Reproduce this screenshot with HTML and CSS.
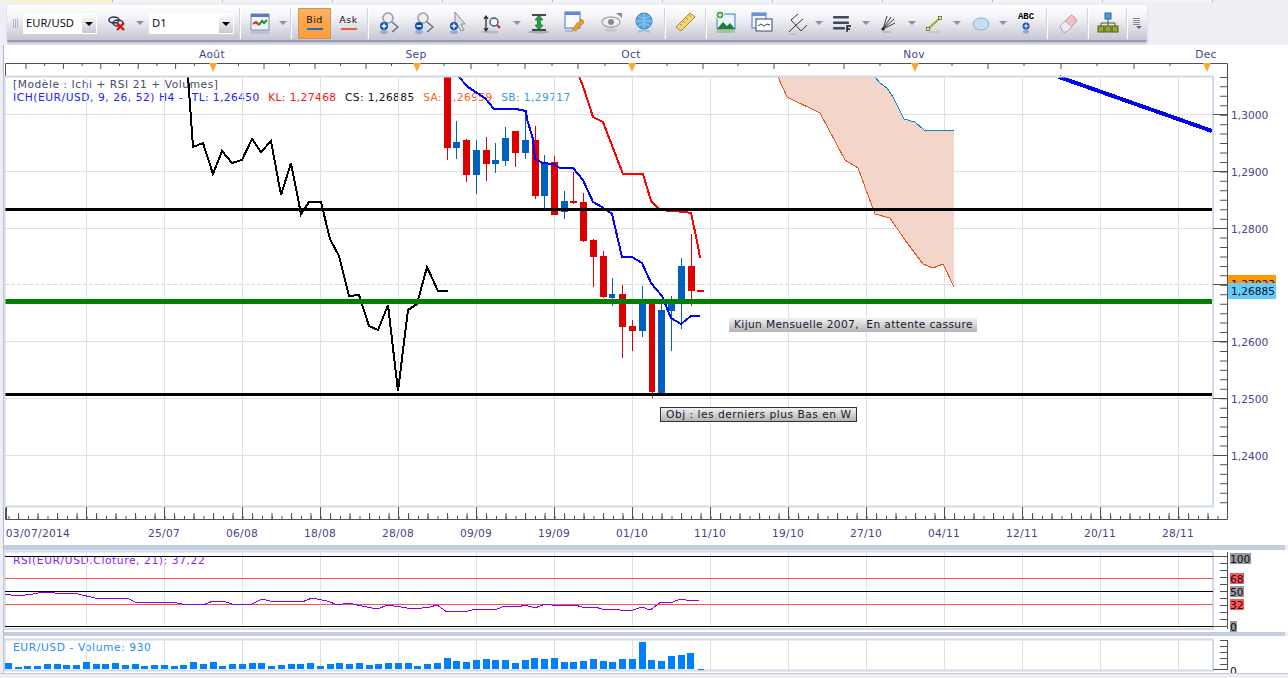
FILE: index.html
```html
<!DOCTYPE html>
<html lang="fr">
<head>
    <meta charset="UTF-8">
    <title>EUR/USD - Graphique</title>
    <link rel="stylesheet" href="styles.css">
</head>
<body>
    <div class="tabs">
        <div class="tab tab-active"></div><div class="tab"></div><div class="tab"></div><div class="tab"></div><div class="tab"></div><div class="tab"></div><div class="tab"></div><div class="tab"></div><div class="tab"></div><div class="tab"></div><div class="tab"></div>
    </div>

    <div class="toolbar">
        <div class="grip"></div>
        <div class="combo combo-pair"><span>EUR/USD</span><i class="combo-btn"></i></div>
        <svg class="icon" viewBox="0 0 24 24"><g fill="none" stroke="#2a3a5a" stroke-width="1.6"><ellipse cx="8" cy="9" rx="5" ry="3"/><ellipse cx="12" cy="12" rx="5" ry="3"/></g><path d="M11 12l7 7M18 12l-7 7" stroke="#e01010" stroke-width="2.4"/></svg>
        <i class="arrow"></i>
        <div class="combo combo-period"><span>D1</span><i class="combo-btn"></i></div>
        <i class="sep"></i>
        <svg class="icon" viewBox="0 0 24 24"><rect x="3" y="3" width="18" height="16" fill="#eef2fa" stroke="#7a8ab0"/><rect x="3" y="3" width="18" height="3" fill="#5a7ac0"/><path d="M5 13l3-2 3 3" fill="none" stroke="#e02020" stroke-width="2"/><path d="M11 14l3-4 2 2 3-3" fill="none" stroke="#209020" stroke-width="2"/><rect x="3" y="20" width="18" height="3" fill="#b8c0d4"/></svg>
        <i class="arrow"></i>
        <i class="sep"></i>
        <button class="quote quote-on">Bid<i class="bar-blue"></i></button>
        <button class="quote">Ask<i class="bar-red"></i></button>
        <i class="sep"></i>
        <svg class="icon" viewBox="0 0 24 24"><circle cx="12" cy="7" r="5" fill="#eef0f4" stroke="#9aa0aa" stroke-width="1.6"/><path d="M16 11l6 5-6 5" fill="none" stroke="#606470" stroke-width="1.2"/><circle cx="8" cy="15" r="4" fill="#1050b0"/><path d="M5.6 15h4.8M8 12.6v4.8" stroke="#fff" stroke-width="1.5"/><ellipse cx="8" cy="21" rx="4" ry="2" fill="#1050b0" opacity=".3"/></svg>
        <svg class="icon" viewBox="0 0 24 24"><circle cx="12" cy="7" r="5" fill="#eef0f4" stroke="#9aa0aa" stroke-width="1.6"/><path d="M16 11l6 5-6 5" fill="none" stroke="#606470" stroke-width="1.2"/><circle cx="8" cy="15" r="4" fill="#1050b0"/><path d="M5.6 15h4.8" stroke="#fff" stroke-width="1.6"/><ellipse cx="8" cy="21" rx="4" ry="2" fill="#1050b0" opacity=".3"/></svg>
        <svg class="icon" viewBox="0 0 24 24"><path d="M9 1l10 12h-4l3 6-3 1-3-6-3 3z" fill="#dfe1e6" stroke="#8a8e98"/><circle cx="8" cy="15" r="4" fill="#1050b0"/><path d="M5.6 15h4.8M8 12.6v4.8" stroke="#fff" stroke-width="1.5"/><ellipse cx="8" cy="21" rx="4" ry="2" fill="#1050b0" opacity=".3"/></svg>
        <svg class="icon" viewBox="0 0 24 24"><path d="M6 6v13M4 8l2-3 2 3M4 17l2 3 2-3" fill="none" stroke="#202020" stroke-width="1.2"/><circle cx="14" cy="11" r="4" fill="#f4f8fc" stroke="#405870" stroke-width="1.4"/><path d="M17 14l3 3" stroke="#c03020" stroke-width="2"/><ellipse cx="10" cy="21" rx="9" ry="1.5" fill="#80848c" opacity=".4"/></svg>
        <i class="arrow"></i>
        <svg class="icon" viewBox="0 0 24 24"><path d="M5 4h14M5 19h14" stroke="#101010" stroke-width="1.6"/><path d="M12 4l4 5h-2.4v5H16l-4 5-4-5h2.4V9H8z" fill="#20a040" stroke="#106020" stroke-width=".6"/><ellipse cx="12" cy="21" rx="11" ry="1.5" fill="#70747c" opacity=".45"/></svg>
        <svg class="icon" viewBox="0 0 24 24"><rect x="2" y="1" width="15" height="16" fill="#f8faff" stroke="#4a78c8"/><rect x="2" y="1" width="15" height="3" fill="#5a8ad8"/><path d="M9 19l5-7 3-1 1-3 3 2-1 3-3 1-4 6z" fill="#f0a020" stroke="#b07010" stroke-width=".6"/><path d="M2 20h8" stroke="#4a78c8" opacity=".3" stroke-width="2"/></svg>
        <svg class="icon" viewBox="0 0 24 24"><ellipse cx="11" cy="11" rx="9" ry="5" fill="#f0f0f0" stroke="#a8a8a8" stroke-width="1.4"/><circle cx="11" cy="11" r="3" fill="#8a8a8a"/><path d="M16 2h6v5z" fill="#8a8a8a"/><ellipse cx="11" cy="19" rx="6" ry="2" fill="#b0b0b0" opacity=".4"/></svg>
        <svg class="icon" viewBox="0 0 24 24"><circle cx="12" cy="10" r="8" fill="#5aa8e0" stroke="#3a80c0"/><path d="M4 10h16M12 2v16M6 5c4 3 8 3 12 0M6 15c4-3 8-3 12 0" fill="none" stroke="#a8d4f4" stroke-width=".8"/><path d="M6 21l6-2 6 2" fill="none" stroke="#5aa8e0" opacity=".5" stroke-width="2"/></svg>
        <i class="sep"></i>
        <svg class="icon" viewBox="0 0 24 24"><path d="M3 16L17 2l5 4L8 20z" fill="#f4d878" stroke="#a88830"/><path d="M7 13l2 2M10 10l2 2M13 7l2 2M16 4l2 2" stroke="#a88830"/></svg>
        <i class="sep"></i>
        <svg class="icon" viewBox="0 0 24 24"><rect x="3" y="3" width="18" height="15" fill="#e8f4fc" stroke="#4a78b8"/><path d="M3 18l6-7 4 4 3-3 5 6z" fill="#208030"/><circle cx="6" cy="4" r="4" fill="#40a040" stroke="#fff"/><path d="M4 4h4M6 2v4" stroke="#fff"/><rect x="3" y="19" width="18" height="3" fill="#a0c890"/></svg>
        <svg class="icon" viewBox="0 0 24 24"><rect x="2" y="2" width="14" height="15" fill="#eef4fc" stroke="#4a78c0"/><rect x="2" y="2" width="14" height="3" fill="#6a94d8"/><rect x="6" y="8" width="16" height="12" fill="#fff" stroke="#304878"/><path d="M8 15l3-2 3 2 3-2 3 1" fill="none" stroke="#404040"/></svg>
        <svg class="icon" viewBox="0 0 24 24"><path d="M4 21L10 15M6 9L16 20M6 9L13 3M10 15L18 8M16 20L22 14" fill="none" stroke="#383838"/><path d="M4 23h8" stroke="#a0a0a8" opacity=".6"/></svg>
        <i class="arrow"></i>
        <svg class="icon" viewBox="0 0 24 24"><rect x="3" y="5" width="16" height="2.4" rx="1" fill="#3a4a60"/><rect x="3" y="10.5" width="16" height="2.4" rx="1" fill="#3a4a60"/><rect x="3" y="16" width="12" height="2.4" rx="1" fill="#3a4a60"/><path d="M17 21v-6h4M17 18h3" fill="none" stroke="#101010" stroke-width="1.3"/></svg>
        <i class="arrow"></i>
        <svg class="icon" viewBox="0 0 24 24"><path d="M7 18L11 5M7 18L15 6M7 18L18 8M7 18L19 12" stroke="#383838" fill="none"/><circle cx="7" cy="18" r="1.6" fill="#202020"/><path d="M6 21h9" stroke="#a0a0a8" opacity=".6" stroke-width="1.5"/></svg>
        <i class="arrow"></i>
        <svg class="icon" viewBox="0 0 24 24"><path d="M6 18L18 7" stroke="#90b030" stroke-width="2"/><rect x="4.5" y="16.5" width="3" height="3" fill="#f0f0a0" stroke="#505010" stroke-width=".7"/><rect x="16.5" y="5.5" width="3" height="3" fill="#f0f0a0" stroke="#505010" stroke-width=".7"/><path d="M7 21h12" stroke="#a0a0a8" opacity=".5"/></svg>
        <i class="arrow"></i>
        <svg class="icon" viewBox="0 0 24 24"><ellipse cx="12" cy="13" rx="8" ry="6" fill="#c8dcf0" stroke="#8ab0d4"/></svg>
        <i class="arrow"></i>
        <div class="abc"><span>ABC</span><svg viewBox="0 0 10 12" width="10" height="12"><circle cx="5" cy="4" r="3.5" fill="#1050b0"/><path d="M2.6 4h4.8M5 1.6v4.8" stroke="#fff"/><ellipse cx="5" cy="9.5" rx="3" ry="2" fill="#1050b0" opacity=".35"/></svg></div>
        <i class="sep"></i>
        <svg class="icon" viewBox="0 0 24 24"><path d="M4 15L14 5c1-1 2-1 3 0l3 3c1 1 1 2 0 3L10 21H7z" fill="#f0c0c8" stroke="#c89098"/><path d="M4 15l5-5 7 6-6 5H7z" fill="#ececf0" stroke="#b0b0b8"/></svg>
        <i class="sep"></i>
        <svg class="icon" viewBox="0 0 24 24"><rect x="9" y="2" width="6" height="6" fill="#4a9ae0" stroke="#2a6ab0"/><path d="M12 8v4M5 12h14M5 12v3M12 12v3M19 12v3" stroke="#506010" fill="none"/><g fill="#90a830" stroke="#506010"><rect x="2" y="15" width="6" height="6"/><rect x="9" y="15" width="6" height="6"/><rect x="16" y="15" width="6" height="6"/></g></svg>
        <i class="sep"></i>
        <svg class="menu-icon" viewBox="0 0 9 11"><path d="M0 .5h7M0 2.5h7M0 4.5h7M0 6.5h7" stroke="#8a8a94"/><path d="M3 8h6l-3 3z" fill="#6a6a74"/></svg>
    </div>

    <div class="pane pane-main">
        <svg class="plot" width="1288" height="500" viewBox="0 45 1288 500">
            <!-- echelle du temps en haut -->
            <path class="axis" d="M5 76V63H1227V519H5V507"/>
            <path class="tick" d="M26 63v6M63.4 63v6M100.8 63v6M138.2 63v6M175.6 63v6M213 63v6M264 63v6M315 63v6M366 63v6M417 63v6M471 63v6M525 63v6M578 63v6M632 63v6M703 63v6M774 63v6M844 63v6M915 63v6M988 63v6M1061 63v6M1134 63v6M1207 63v6"/>
            <path class="tick" d="M44.7 63v3M82.1 63v3M119.5 63v3M156.9 63v3M194.3 63v3M238.5 63v3M289.5 63v3M340.5 63v3M391.5 63v3M444 63v3M498 63v3M552 63v3M605 63v3M667 63v3M738 63v3M809 63v3M880 63v3M952 63v3M1024 63v3M1097 63v3M1170 63v3"/>
            <g class="month-mark">
                <path d="M209 63h8l-4 9zM413 63h8l-4 9zM628 63h8l-4 9zM911 63h8l-4 9zM1203 63h8l-4 9z"/>
            </g>
            <g class="label label-date" text-anchor="middle">
                <text x="212" y="58">Août</text>
                <text x="416" y="58">Sep</text>
                <text x="631" y="58">Oct</text>
                <text x="914" y="58">Nov</text>
                <text x="1206" y="58">Dec</text>
            </g>

            <!-- grille -->
            <path class="grid" d="M86.5 77V507M164.5 77V507M242.5 77V507M320.5 77V507M398.5 77V507M476.5 77V507M554.5 77V507M632.5 77V507M710.5 77V507M788.5 77V507M866.5 77V507M944.5 77V507M1022.5 77V507M1100.5 77V507M1178.5 77V507"/>
            <path class="grid" d="M5 114.5H1213M5 171.5H1213M5 228.5H1213M5 341.5H1213M5 398.5H1213M5 455.5H1213"/>
            <path class="last-price" d="M5 284.5H1213"/>

            <!-- nuage ichimoku -->
            <path class="cloud" d="M778 77L787 97 820 113 845 160 858 168 875 214 890 218 905 240 923 264 933 268 943 264 954 287V130H924L915 122 904 119 893 97 887 88 880 83 875 77Z"/>
            <path class="senkou-a" d="M778 77L787 97 820 113 845 160 858 168 875 214 890 218 905 240 923 264 933 268 943 264 954 287"/>
            <path class="senkou-b" d="M875 77L880 83 887 88 893 97 904 119 915 122 924 130H954"/>

            <!-- bougies : meches puis corps -->
            <path class="wick-red" d="M447.5 147V160M466.5 139V182M486.5 137V181M515.5 131V167M535.5 126V199M554.5 156V215M573.5 172V204M583.5 193V242M593.5 239V287M603.5 251V298M622.5 285V358M632.5 320V351M652.5 304V398M691.5 234V306"/>
            <path class="wick-blue" d="M456.5 121V159M476.5 140V194M495.5 143V173M505.5 127V166M525.5 112V159M544.5 155V210M564.5 191V219M612.5 278V306M642.5 286V337M661.5 303V393M671.5 296V351M681.5 258V329"/>
            <path class="body-red" d="M444 76h7v72h-7zM463 140h7v35h-7zM483 150h7v14h-7zM512 131h7v22h-7zM532 140h7v56h-7zM551 162h7v53h-7zM570 201h7v2h-7zM580 202h7v39h-7zM590 240h7v17h-7zM600 256h7v41h-7zM619 294h7v33h-7zM629 326h7v5h-7zM649 304h6v88h-6zM688 266h7v25h-7zM697 290h7v2h-7z"/>
            <path class="body-blue" d="M453 142h7v6h-7zM473 150h7v25h-7zM492 160h7v4h-7zM502 138h7v23h-7zM522 140h7v13h-7zM541 162h7v34h-7zM561 201h7v11h-7zM609 294h6v4h-6zM639 304h7v27h-7zM658 310h7v83h-7zM668 304h7v7h-7zM678 266h7v33h-7z"/>

            <!-- tenkan, kijun, chikou, droite -->
            <path class="tenkan" d="M458 76L468 87 477 93 485 98 494 109H516L526 111 527 119 533 139 535 159 543 163 553 164 560 168H573L583 180 593 202 602 207 612 214 622 257H632L642 263 651 283 662 296 671 318 681 324 691 316H700"/>
            <path class="kijun" d="M579 76L584 89 593 117 603 122 623 174H643L651 201 660 210 685 212 691 213 698 246 700 258"/>
            <path class="chikou" d="M188 76L193 147 203 143 213 174 222 151 232 163 242 160 252 139 261 152 271 141 281 195 291 163 301 214 309 202H321L330 239 339 256 349 296 359 295 369 326 378 330 388 305 398 391 408 310 417 304 427 267 438 291H448"/>
            <path class="trend" d="M1059 77L1212 131"/>

            <!-- niveaux traces a la main -->
            <rect class="level-black" x="5" y="208" width="1208" height="3"/>
            <rect class="level-green" x="5" y="299" width="1208" height="5"/>
            <rect class="level-black" x="5" y="393" width="1208" height="3"/>

            <rect class="plot-border" x="4.5" y="76.5" width="1208.5" height="430"/>

            <!-- echelle de prix -->
            <line class="tick" x1="1223.5" x2="1223.5" y1="76.9" y2="507" stroke-width="7" stroke-dasharray="1 8.45"/>
            <path class="tick" d="M1213 114.5h14M1213 171.5h14M1213 228.5h14M1213 284.5h14M1213 341.5h14M1213 398.5h14M1213 455.5h14"/>
            <g class="label">
                <text x="1231" y="119">1,3000</text>
                <text x="1231" y="176">1,2900</text>
                <text x="1231" y="233">1,2800</text>
                <text x="1231" y="346">1,2600</text>
                <text x="1231" y="403">1,2500</text>
                <text x="1231" y="460">1,2400</text>
            </g>
            <rect x="1228" y="275" width="48" height="9" fill="#ff9900"/>
            <text class="tag-text" x="1231" y="288">1,27023</text>
            <rect x="1228" y="283" width="48" height="16" fill="#66ccff"/>
            <text class="tag-text" x="1231" y="295">1,26885</text>

            <!-- echelle des dates -->
            <line class="tick" x1="8.5" x2="1225" y1="517.5" y2="517.5" stroke-width="3" stroke-dasharray="1 8.75"/>
            <line class="tick" x1="18" x2="1225" y1="516" y2="516" stroke-width="6" stroke-dasharray="1 18.5"/>
            <path class="tick" d="M6.5 507V519M86.5 507V519M164.5 507V519M242.5 507V519M320.5 507V519M398.5 507V519M476.5 507V519M554.5 507V519M632.5 507V519M710.5 507V519M788.5 507V519M866.5 507V519M944.5 507V519M1022.5 507V519M1100.5 507V519M1178.5 507V519"/>
            <g class="label label-date" text-anchor="middle">
                <text x="38" y="537">03/07/2014</text>
                <text x="164" y="537">25/07</text>
                <text x="242" y="537">06/08</text>
                <text x="320" y="537">18/08</text>
                <text x="398" y="537">28/08</text>
                <text x="476" y="537">09/09</text>
                <text x="554" y="537">19/09</text>
                <text x="632" y="537">01/10</text>
                <text x="710" y="537">11/10</text>
                <text x="788" y="537">19/10</text>
                <text x="866" y="537">27/10</text>
                <text x="944" y="537">04/11</text>
                <text x="1022" y="537">12/11</text>
                <text x="1100" y="537">20/11</text>
                <text x="1178" y="537">28/11</text>
            </g>
        </svg>

        <div class="legend">
            <div class="legend-title">[Modèle : Ichi + RSI 21 + Volumes]</div>
            <div class="legend-row">
                <span class="c-tl c-name">ICH(EUR/USD, 9, 26, 52) H4 -</span>
                <span class="c-tl">TL: 1,26450</span>
                <span class="c-kl">KL: 1,27468</span>
                <span class="c-cs">CS: 1,26885</span>
                <span class="c-sa">SA: 1,26959</span>
                <span class="c-sb">SB: 1,29717</span>
            </div>
        </div>
        <div class="note note-kijun">Kijun Mensuelle 2007,&nbsp; En attente cassure</div>
        <div class="note note-obj">Obj : les derniers plus Bas en W</div>
    </div>

    <div class="splitter"></div>

    <div class="pane pane-rsi">
        <svg class="plot" width="1288" height="82" viewBox="0 550 1288 82">
            <path class="grid" d="M86.5 553V629M164.5 553V629M242.5 553V629M320.5 553V629M398.5 553V629M476.5 553V629M554.5 553V629M632.5 553V629M710.5 553V629M788.5 553V629M866.5 553V629M944.5 553V629M1022.5 553V629M1100.5 553V629M1178.5 553V629"/>
            <rect class="plot-border" x="4.5" y="551.5" width="1208.5" height="77.5"/>
            <path class="rsi-level" d="M5 578.5H1213M5 604.5H1213"/>
            <path class="rsi-frame" d="M5 556.5H1213M5 591.5H1213M5 626.5H1213"/>
            <path class="rsi-line" d="M5 594L17 596 33 594 43 592 55 593 78 594 95 598H127L135 602 160 603 172 602 182 604 203 605 213 601H223L232 604H252L262 599 270 601 302 602 312 598 327 601 338 605 348 603 367 607 377 609 388 605 407 608H422L430 607 437 605 447 612 453 611 465 612 475 609H497L505 606 518 607 525 605 535 608 545 604 558 606 562 605H575L582 607H595L602 609H618L620 610H633L642 607 650 610 661 602H673L680 599 686 600H699"/>
            <path class="tick" d="M1227.5 552V629M1213 556.5h14M1213 626.5h14M1220 591.5h7"/>
            <line class="tick" x1="1223.5" x2="1223.5" y1="563" y2="626" stroke-width="7" stroke-dasharray="1 6"/>
            <rect class="tag-grey" x="1230" y="553" width="21" height="11"/>
            <rect class="tag-red" x="1230" y="573" width="14" height="11"/>
            <rect class="tag-grey" x="1230" y="586" width="14" height="11"/>
            <rect class="tag-red" x="1230" y="599" width="14" height="11"/>
            <rect class="tag-grey" x="1230" y="621" width="7" height="11"/>
            <g class="tag-text">
                <text x="1230" y="562.5">100</text>
                <text x="1230" y="582.5">68</text>
                <text x="1230" y="595.5">50</text>
                <text x="1230" y="608.5">32</text>
                <text x="1230" y="630.5">0</text>
            </g>
        </svg>
        <div class="rsi-title">RSI(EUR/USD.Cloture, 21): 37,22</div>
    </div>

    <div class="splitter"></div>

    <div class="pane pane-volume">
        <svg class="plot" width="1288" height="37" viewBox="0 636 1288 37">
            <path class="grid" d="M86.5 640V671M164.5 640V671M242.5 640V671M320.5 640V671M398.5 640V671M476.5 640V671M554.5 640V671M632.5 640V671M710.5 640V671M788.5 640V671M866.5 640V671M944.5 640V671M1022.5 640V671M1100.5 640V671M1178.5 640V671"/>
            <rect class="plot-border" x="4.5" y="639.5" width="1208.5" height="31"/>
            <path class="volume" d="M5 663h7v6h-7zM15 667h7v2h-7zM24 666h7v3h-7zM34 666h7v3h-7zM44 664h7v5h-7zM54 664h7v5h-7zM63 665h7v4h-7zM73 665h7v4h-7zM83 662h7v7h-7zM93 664h7v5h-7zM102 664h7v5h-7zM112 663h7v6h-7zM122 665h7v4h-7zM132 664h7v5h-7zM141 666h7v3h-7zM151 665h7v4h-7zM161 665h7v4h-7zM171 666h7v3h-7zM180 665h7v4h-7zM190 662h7v7h-7zM200 664h7v5h-7zM210 662h7v7h-7zM219 666h7v3h-7zM229 664h7v5h-7zM239 664h7v5h-7zM249 663h7v6h-7zM258 663h7v6h-7zM268 666h7v3h-7zM278 665h7v4h-7zM288 664h7v5h-7zM297 664h7v5h-7zM307 663h7v6h-7zM317 666h7v3h-7zM327 664h7v5h-7zM336 663h7v6h-7zM346 664h7v5h-7zM356 663h7v6h-7zM366 665h7v4h-7zM375 664h7v5h-7zM385 663h7v6h-7zM395 663h7v6h-7zM405 663h7v6h-7zM414 666h7v3h-7zM424 664h7v5h-7zM434 663h7v6h-7zM444 658h7v11h-7zM453 661h7v8h-7zM463 662h7v7h-7zM473 660h7v9h-7zM483 659h7v10h-7zM492 660h7v9h-7zM502 660h7v9h-7zM512 663h7v6h-7zM522 660h7v9h-7zM531 658h7v11h-7zM541 659h7v10h-7zM551 658h7v11h-7zM561 662h7v7h-7zM570 662h7v7h-7zM580 661h7v8h-7zM590 659h7v10h-7zM600 661h7v8h-7zM609 662h7v7h-7zM619 659h7v10h-7zM629 659h7v10h-7zM639 642h7v27h-7zM648 660h7v9h-7zM658 661h7v8h-7zM668 656h7v13h-7zM678 655h7v14h-7zM687 653h7v16h-7zM698 669h6v1h-6z"/>
            <path class="tick" d="M1227.5 640V670M1213 669.5h14"/>
            <line class="tick" x1="1223.5" x2="1223.5" y1="640" y2="668" stroke-width="7" stroke-dasharray="1 5"/>
            <text class="tag-text" x="1230" y="675">0</text>
        </svg>
        <div class="volume-title">EUR/USD - Volume: 930</div>
    </div>
    <div class="footer"></div>
</body>
</html>
```

FILE: styles.css
```css
body {
    margin: 0;
    width: 1288px;
    height: 678px;
    overflow: hidden;
    background-color: #eeeef5;
    font-family: "DejaVu Sans", Verdana, sans-serif;
    font-size: 10.67px;
}
.tabs {
    display: flex;
    height: 5px;
    padding-left: 3px;
}
.tab {
    width: 109px;
    height: 2px;
    border-right: 1px solid #b8b8c8;
    background-color: #f4f4f8;
}
.tab-active {
    background-color: #fdf2c8;
}

/* barre d'outils */
.toolbar {
    display: grid;
    grid-template-columns: 16px 80px 30px 14px 89px 8px 32px 14px 2px 39px 35px 4px 36px 33px 38px 30px 19px 26px 46px 28px 36px 6px 34px 8px 32px 40px 30px 14px 32px 16px 28px 20px 24px 22px 26px 18px 28px 14px 28px 12px 28px 10px 10px;
    align-items: center;
    justify-items: center;
    box-sizing: border-box;
    width: 1140px;
    height: 37px;
    margin: 0 0 3px 7px;
    padding-top: 1px;
    border-bottom: 2px solid #9c9cb0;
    border-radius: 2px;
    background: linear-gradient(#ffffff, #f3f3f7 35%, #c6c6d4);
    box-shadow: 0 2px 2px rgba(120, 120, 140, 0.35);
}
.grip {
    width: 5px;
    height: 9px;
    background: repeating-linear-gradient(90deg, #b4b4c0 0 1px, transparent 1px 2px);
}
.combo {
    display: flex;
    justify-content: space-between;
    box-sizing: border-box;
    height: 21px;
    padding: 1px 1px 1px 3px;
    background-color: #ffffff;
    font-family: "Noto Sans", sans-serif;
    font-size: 11.2px;
    line-height: 18px;
    color: #101018;
}
.combo-pair {
    justify-self: start;
    width: 74px;
}
.combo-period {
    width: 85px;
}
.combo-btn {
    position: relative;
    width: 14px;
    background: linear-gradient(#ffffff, #c8c8d4);
}
.combo-btn::after {
    content: "";
    position: absolute;
    left: 3px;
    top: 8px;
    border: 4px solid transparent;
    border-top: 4px solid #000000;
    border-bottom: 0;
}
.icon {
    width: 24px;
    height: 24px;
}
.menu-icon {
    width: 9px;
    height: 11px;
}
.arrow {
    width: 0;
    height: 0;
    border: 4px solid transparent;
    border-top: 4px solid #9090a0;
    border-bottom: 0;
}
.sep {
    width: 2px;
    height: 31px;
    background: linear-gradient(90deg, #d4d4de 50%, #ffffff 50%);
}
.quote {
    display: flex;
    flex-direction: column;
    align-items: center;
    box-sizing: border-box;
    width: 33px;
    height: 31px;
    padding: 6px 0 0;
    border: none;
    background: none;
    font-family: "DejaVu Sans", sans-serif;
    font-size: 9.5px;
    line-height: 12px;
    letter-spacing: 0.5px;
    color: #101010;
}
.quote-on {
    justify-self: end;
    border: 1px solid #c09a60;
    background: linear-gradient(#ffb060, #ff9a3a);
    padding-top: 5px;
}
.bar-blue,
.bar-red {
    width: 16px;
    height: 2px;
    margin-top: 2px;
}
.bar-blue {
    background-color: #1070d8;
}
.bar-red {
    background-color: #f05a30;
}
.abc {
    display: flex;
    flex-direction: column;
    align-items: center;
    height: 21px;
    font-family: "Liberation Mono", monospace;
    font-size: 9px;
    font-weight: bold;
    line-height: 9px;
    color: #000000;
}

/* panneaux */
.pane {
    position: relative;
    background-color: #ffffff;
    box-shadow: inset 3px 0 0 #eeeef5, inset 4px 0 0 #b4b4c4;
}
.pane-main {
    height: 500px;
}
.pane-rsi {
    height: 82px;
}
.pane-volume {
    height: 37px;
    overflow: hidden;
}
.plot {
    display: block;
    position: relative;
    z-index: 1; /* les courbes passent sur les legendes */
    overflow: visible;
}
.splitter {
    height: 5px;
    margin: 0 3px 0 3px;
    border-left: 1px solid #b4b4c4;
    background-color: #c3cfdf;
}
.pane-rsi + .splitter {
    height: 4px;
}
.footer {
    height: 5px;
    border-top: 1px solid #c8c8d4;
}

/* elements du graphique */
.axis {
    fill: none;
    stroke: #505050;
    stroke-width: 1;
    transform: translate(.5px, .5px);
}
.tick {
    fill: none;
    stroke: #505050;
}
.grid {
    fill: none;
    stroke: #e0e0e0;
    stroke-width: 1;
}
.last-price {
    fill: none;
    stroke: #d8d8d8;
    stroke-dasharray: 4 2;
}
.plot-border {
    fill: none;
    stroke: #d0dbe8;
    stroke-width: 2;
}
.month-mark {
    fill: #ffa62e;
}
.label {
    font-size: 10.67px;
    fill: #44468c;
}
.label-date {
    letter-spacing: 0.3px;
}
.tag-text {
    font-size: 10.67px;
    fill: #101020;
}
.tag-grey {
    fill: #999999;
}
.tag-red {
    fill: #ff5555;
}
.cloud {
    fill: #f4d5ca;
}
.senkou-a {
    fill: none;
    stroke: #e8501c;
}
.senkou-b {
    fill: none;
    stroke: #0a86c4;
}
.wick-red {
    stroke: #dd0000;
}
.wick-blue {
    stroke: #0060c0;
}
.body-red {
    fill: #dd0000;
}
.body-blue {
    fill: #0060c0;
}
.tenkan,
.kijun,
.chikou,
.trend,
.rsi-line,
.senkou-a,
.senkou-b {
    shape-rendering: crispEdges;
}
.tenkan {
    fill: none;
    stroke: #0000ff;
    stroke-width: 2;
}
.kijun {
    fill: none;
    stroke: #ff0000;
    stroke-width: 2;
}
.chikou {
    fill: none;
    stroke: #000000;
    stroke-width: 2;
}
.trend {
    stroke: #0000ee;
    stroke-width: 4;
}
.level-black {
    fill: #000000;
}
.level-green {
    fill: #008000;
}
.rsi-level {
    stroke: #ff5050;
}
.rsi-frame {
    stroke: #000000;
}
.rsi-line {
    fill: none;
    stroke: #8000ff;
}
.volume {
    fill: #0080ff;
}

/* textes par dessus le graphique */
.legend {
    position: absolute;
    left: 13px;
    top: 33px;
    line-height: 13px;
    letter-spacing: 0.4px;
    white-space: nowrap;
}
.legend-title {
    color: #4a4a6a;
    letter-spacing: 0.55px;
}
.legend-row {
    display: flex;
    gap: 8.5px;
}
.c-name {
    letter-spacing: 0.55px;
}
.c-tl {
    color: #2020ff;
}
.c-kl {
    color: #ff1010;
}
.c-cs {
    color: #101010;
}
.c-sa {
    color: #ff5a20;
}
.c-sb {
    color: #3a9ad8;
}
.note {
    position: absolute;
    z-index: 2;
    box-sizing: border-box;
    height: 14px;
    line-height: 13px;
    color: #201830;
    background: linear-gradient(#f0f0f0, #b4b4b4);
    white-space: nowrap;
}
.note-kijun {
    left: 729px;
    top: 273px;
    width: 248px;
    padding-left: 5px;
    letter-spacing: 0.35px;
}
.note-obj {
    left: 660px;
    top: 362px;
    width: 197px;
    height: 15px;
    padding-left: 5px;
    border: 1px solid #333333;
    letter-spacing: 0.5px;
}
.rsi-title,
.volume-title {
    position: absolute;
    left: 13px;
    top: 4px;
    line-height: 13px;
    letter-spacing: 0.6px;
    white-space: nowrap;
}
.rsi-title {
    color: #8a20ff;
}
.volume-title {
    top: 5px;
    color: #2a8cff;
}
```
